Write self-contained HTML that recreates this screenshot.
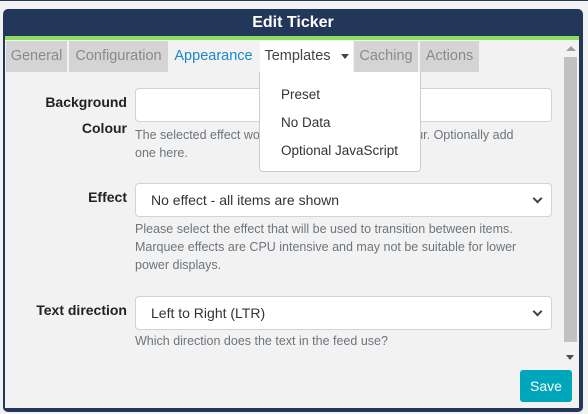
<!DOCTYPE html>
<html><head><meta charset="utf-8"><style>
*{box-sizing:border-box;margin:0;padding:0}
body{width:588px;height:414px;background:#f2f2f2;position:relative;overflow:hidden;font-family:"Liberation Sans",sans-serif;font-size:13px}
.a{position:absolute}
.frame{left:3px;top:9px;width:580px;height:403px;background:#22375a;border-radius:5px}
.body{left:5px;top:40px;width:574px;height:368px;background:#f2f2f2}
.green{left:5px;top:36px;width:574px;height:4px;background:#8fdc62}
.title{left:3px;top:9px;width:580px;height:27px;color:#fff;font-weight:bold;font-size:16px;text-align:center;line-height:28px}
.tab{top:41px;height:31px;line-height:31px;text-align:center;color:#8a8a8a;background:#d4d4d4;font-size:14.5px}
.lbl{right:461px;font-weight:bold;color:#222;text-align:right;font-size:14px;line-height:26px}
.inp{left:135px;width:417px;height:34px;background:#fff;border:1px solid #ced4da;border-radius:4px;color:#333;font-size:14px;line-height:32px;padding-left:15px}
.help{left:135px;color:#6c757d;font-size:12.5px;line-height:18px;width:420px}
.chev{position:absolute;right:10px;top:11px;width:7px;height:7px;border-right:2px solid #444;border-bottom:2px solid #444;transform:rotate(45deg)}
.dd{left:259px;top:72px;width:162px;height:100px;background:#fff;border:1px solid #ccc;border-top:none;border-radius:0 0 4px 4px}
.dd div{position:absolute;left:21px;color:#333;font-size:13.5px}
</style></head><body>
<div class="a" style="left:0;top:0;width:588px;height:1px;background:#22375a"></div>
<div class="a frame"></div>
<div class="a body"></div>
<div class="a green"></div>
<div class="a title">Edit Ticker</div>
<div class="a tab" style="left:6px;width:61px">General</div>
<div class="a tab" style="left:69px;width:99px">Configuration</div>
<div class="a tab" style="left:168px;width:91px;background:none;color:#1a87c9">Appearance</div>
<div class="a tab" style="left:260px;width:93px;background:#fff;color:#444">Templates <span style="display:inline-block;width:0;height:0;border-left:4px solid transparent;border-right:4px solid transparent;border-top:5px solid #444;vertical-align:middle;margin-left:6px"></span></div>
<div class="a tab" style="left:354px;width:64px">Caching</div>
<div class="a tab" style="left:420px;width:59px">Actions</div>

<div class="a lbl" style="top:89px">Background<br>Colour</div>
<div class="a inp" style="top:88px"></div>
<div class="a help" style="top:126px">The selected effect would use the background colour. Optionally add<br>one here.</div>

<div class="a lbl" style="top:184px">Effect</div>
<div class="a inp" style="top:183px">No effect - all items are shown<span class="chev"></span></div>
<div class="a help" style="top:220px">Please select the effect that will be used to transition between items.<br>Marquee effects are CPU intensive and may not be suitable for lower<br>power displays.</div>

<div class="a lbl" style="top:297px">Text direction</div>
<div class="a inp" style="top:296px">Left to Right (LTR)<span class="chev"></span></div>
<div class="a help" style="top:332px">Which direction does the text in the feed use?</div>

<div class="a dd"><div style="top:15px">Preset</div><div style="top:43px">No Data</div><div style="top:71px">Optional JavaScript</div></div>

<div class="a" style="left:563px;top:40px;width:16px;height:325px;background:#f2f2f2"></div>
<div class="a" style="left:566px;top:46px;width:0;height:0;border-left:5px solid transparent;border-right:5px solid transparent;border-bottom:5px solid #a0a0a0"></div>
<div class="a" style="left:564px;top:57px;width:13px;height:285px;background:#c1c1c1"></div>
<div class="a" style="left:566px;top:355px;width:0;height:0;border-left:4px solid transparent;border-right:4px solid transparent;border-top:5px solid #505050"></div>

<div class="a" style="left:520px;top:370px;width:52px;height:32px;background:#00a6bb;border-radius:3px;color:#fff;font-size:14px;text-align:center;line-height:32px">Save</div>
</body></html>
